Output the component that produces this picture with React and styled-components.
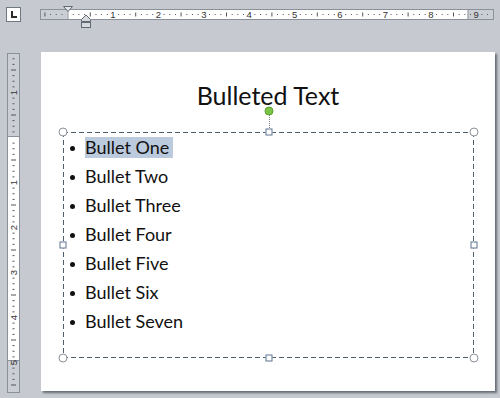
import React from 'react';
import styled, { createGlobalStyle } from 'styled-components';

const GlobalStyle = createGlobalStyle`
  html, body {
    margin: 0;
    padding: 0;
    background: #c6cad0;
  }
  body {
    font-family: Lato, "Open Sans", sans-serif;
  }
`;

const Frame = styled.div`
  width: 500px;
  height: 398px;
  overflow: hidden;
  display: grid;
  grid-template-columns: 40px 1fr;
  grid-template-rows: 52px 1fr;
  background: #c6cad0;
`;

const Corner = styled.div`
  padding: 7px 0 0 6px;
`;

const TabBox = styled.div`
  width: 15px;
  height: 15px;
  box-sizing: border-box;
  background: #fff;
  border: 1px solid #6f7780;
  position: relative;

  &::before {
    content: '';
    position: absolute;
    left: 4px;
    top: 3px;
    width: 4px;
    height: 5px;
    border-left: 2px solid #2b2b2b;
    border-bottom: 2px solid #2b2b2b;
  }
`;

const TopArea = styled.div`
  padding-top: 9px;
`;

const Ruler = styled.div`
  position: relative;
  box-sizing: border-box;
  width: ${(p) => p.$w}px;
  height: ${(p) => p.$h}px;
  background: #fff;
  border: 1px solid #8a9199;

  svg {
    display: block;
  }
`;

const Marker = styled.svg`
  position: absolute;
  left: ${(p) => p.$x}px;
  top: ${(p) => p.$y}px;
  overflow: visible;
`;

const SideArea = styled.div`
  padding: 1px 0 0 7px;
`;

const Slide = styled.div`
  margin-left: 1px;
  width: 454px;
  height: 339px;
  background: #fff;
  box-shadow: 2px 2px 2px rgba(70, 76, 86, 0.75);
  padding-top: 28px;
  box-sizing: border-box;
`;

const Title = styled.h1`
  margin: 0 0 22px;
  font-family: Lato, "Open Sans", sans-serif;
  font-weight: 400;
  font-size: 25px;
  line-height: 30px;
  text-align: center;
  color: #111;
`;

const dash = '#4e5e6e';

const TextBox = styled.div`
  position: relative;
  margin: 0 21px 0 22px;
  height: 226px;
  padding-top: 1px;
  box-sizing: border-box;
  background:
    linear-gradient(90deg, ${dash} 5px, transparent 5px) 0 0 / 8px 1px repeat-x,
    linear-gradient(90deg, ${dash} 5px, transparent 5px) 0 100% / 8px 1px repeat-x,
    linear-gradient(180deg, ${dash} 5px, transparent 5px) 0 0 / 1px 8px repeat-y,
    linear-gradient(180deg, ${dash} 5px, transparent 5px) 100% 0 / 1px 8px repeat-y;
`;

const List = styled.ul`
  list-style: none;
  margin: 0;
  padding: 0 0 0 7px;
`;

const Item = styled.li`
  display: flex;
  align-items: center;
  height: 29px;
  font-size: 18px;
  color: #111;

  &::before {
    content: '';
    width: 5px;
    height: 5px;
    border-radius: 50%;
    background: #111;
    margin-top: 1px;
  }
`;

const Label = styled.span`
  margin-left: 10px;
  padding-right: ${(p) => (p.$selected ? 4 : 0)}px;
  background: ${(p) => (p.$selected ? '#bccadd' : 'transparent')};
  line-height: 1.2;
`;

const Handle = styled.div`
  position: absolute;
  left: ${(p) => p.$x};
  top: ${(p) => p.$y};
  transform: translate(-50%, -50%);
  box-sizing: border-box;
  width: ${(p) => (p.$round ? 9 : 7)}px;
  height: ${(p) => (p.$round ? 9 : 7)}px;
  border-radius: ${(p) => (p.$round ? '50%' : '0')};
  background: #fff;
  border: 1px solid ${(p) => (p.$round ? '#8b9299' : '#5d7590')};
`;

const RotateHandle = styled.div`
  position: absolute;
  left: 50%;
  top: -21px;
  transform: translate(-50%, -50%);
  width: 9px;
  height: 9px;
  box-sizing: border-box;
  border-radius: 50%;
  background: #7cc447;
  border: 1px solid #58a12e;
`;

const RotateStem = styled.div`
  position: absolute;
  left: 50%;
  top: -17px;
  height: 13px;
  border-left: 1px dotted #7d8590;
`;

const bullets = ['One', 'Two', 'Three', 'Four', 'Five', 'Six', 'Seven'];

function TopTicks() {
  const w = 452;
  const zero = 26.6;
  const inch = 45.4;
  const marks = [];
  for (let k = -6; k <= 80; k++) {
    const x = zero + (k * inch) / 8;
    if (x < 2 || x > w - 2 || k === 0) continue;
    if (k % 8 === 0) {
      marks.push(
        <text key={k} x={x} y={7.8} fontSize="9.5" textAnchor="middle" fill="#333" fontFamily="Liberation Sans, sans-serif">
          {Math.abs(k / 8)}
        </text>
      );
    } else if (k % 4 === 0) {
      marks.push(<rect key={k} x={x - 0.5} y={2.5} width={1} height={4} fill="#555" />);
    } else {
      marks.push(<rect key={k} x={x - 0.5} y={4} width={1} height={1} fill="#555" />);
    }
  }
  return (
    <svg width={w} height={9}>
      <rect x={0} y={0} width={26.5} height={9} fill="#cbcfd5" />
      <rect x={427} y={0} width={25} height={9} fill="#cbcfd5" />
      <rect x={26.5} y={0} width={1} height={9} fill="#8a9199" />
      <rect x={426.5} y={0} width={1} height={9} fill="#8a9199" />
      {marks}
    </svg>
  );
}

function SideTicks() {
  const h = 338;
  const zero = 83.5;
  const inch = 45;
  const marks = [];
  for (let k = -16; k <= 50; k++) {
    const y = zero + (k * inch) / 8;
    if (y < 2 || y > h - 2 || k === 0) continue;
    if (k % 8 === 0) {
      marks.push(
        <text
          key={k}
          x={5.5}
          y={y + 3}
          fontSize="9.5"
          textAnchor="middle"
          fill="#333"
          fontFamily="Liberation Sans, sans-serif"
          transform={`rotate(-90 5.5 ${y})`}
        >
          {Math.abs(k / 8)}
        </text>
      );
    } else if (k % 4 === 0) {
      marks.push(<rect key={k} x={3} y={y - 0.5} width={5} height={1} fill="#555" />);
    } else {
      marks.push(<rect key={k} x={4.5} y={y - 0.5} width={2} height={1} fill="#555" />);
    }
  }
  return (
    <svg width={11} height={h}>
      <rect x={0} y={0} width={11} height={82} fill="#cbcfd5" />
      <rect x={0} y={306} width={11} height={32} fill="#cbcfd5" />
      <rect x={0} y={82} width={11} height={1} fill="#8a9199" />
      <rect x={0} y={306} width={11} height={1} fill="#8a9199" />
      {marks}
    </svg>
  );
}

export default function App() {
  return (
    <>
      <GlobalStyle />
      <Frame>
        <Corner>
          <TabBox />
        </Corner>
        <TopArea>
          <Ruler $w={454} $h={11}>
            <TopTicks />
            <Marker $x={22} $y={-4} width={10} height={8}>
              <path d="M0.5 0.5 H9.5 L5 5.5 Z" fill="#e4e6e9" stroke="#626a73" />
            </Marker>
            <Marker $x={40} $y={4} width={10} height={14}>
              <path d="M0.5 5.5 L5 1 L9.5 5.5 V7.5 H0.5 Z" fill="#d6d9dd" stroke="#626a73" />
              <rect x={0.5} y={8.5} width={9} height={5} fill="#d6d9dd" stroke="#626a73" />
            </Marker>
          </Ruler>
        </TopArea>
        <SideArea>
          <Ruler $w={13} $h={340}>
            <SideTicks />
          </Ruler>
        </SideArea>
        <Slide>
          <Title>Bulleted Text</Title>
          <TextBox>
            <List>
              {bullets.map((b, i) => (
                <Item key={b}>
                  <Label $selected={i === 0}>Bullet {b}</Label>
                </Item>
              ))}
            </List>
            <RotateStem />
            <RotateHandle />
            <Handle $round $x="0%" $y="0%" />
            <Handle $x="50%" $y="0%" />
            <Handle $round $x="100%" $y="0%" />
            <Handle $x="0%" $y="50%" />
            <Handle $x="100%" $y="50%" />
            <Handle $round $x="0%" $y="100%" />
            <Handle $x="50%" $y="100%" />
            <Handle $round $x="100%" $y="100%" />
          </TextBox>
        </Slide>
      </Frame>
    </>
  );
}
